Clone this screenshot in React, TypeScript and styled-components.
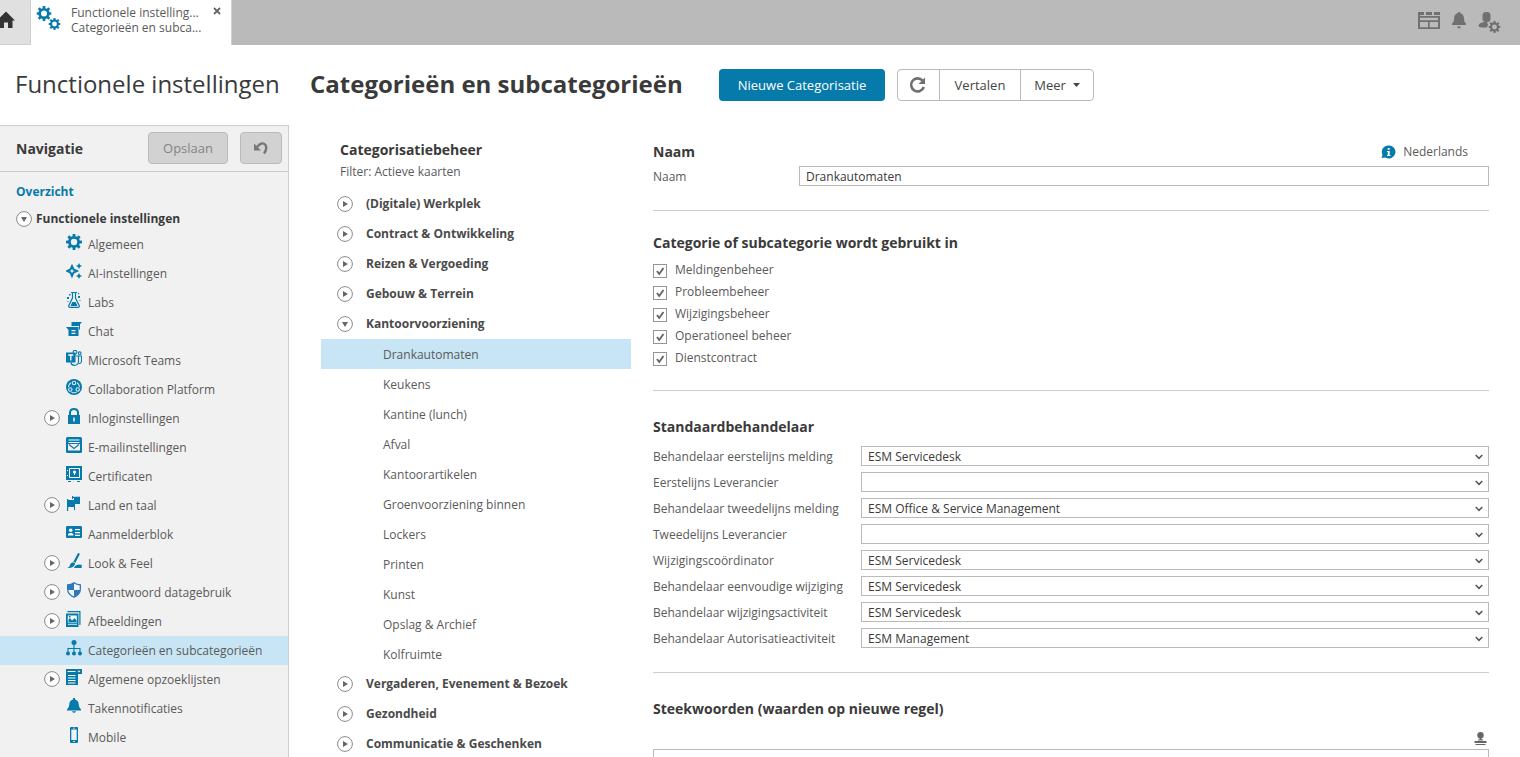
import React from "react";
import styled, { createGlobalStyle } from "styled-components";

const GlobalStyle = createGlobalStyle`
  *, *::before, *::after { box-sizing: border-box; }
  html, body, #root { height: 100%; }
  body {
    margin: 0;
    overflow: hidden;
    background: #fff;
    color: #5a5a5a;
    font-family: "Open Sans", "Noto Sans", sans-serif;
    font-size: 12px;
    line-height: 16px;
  }
  svg { display: block; flex: none; }
`;

const BLUE = "#067aaa";
const SELECTED = "#c7e5f4";

const Page = styled.div`
  display: flex;
  flex-direction: column;
  height: 757px;
  overflow: hidden;
`;

const TopBar = styled.header`
  display: flex;
  flex: none;
  height: 45px;
  background: #bababa;
`;

const HomeTab = styled.div`
  width: 31px;
  background: #e0e0e0;
  border-right: 1px solid #d0d0d0;
  border-bottom: 1px solid #cfcfcf;
  padding-top: 11px;
`;

const ActiveTab = styled.div`
  display: flex;
  width: 201px;
  background: #fff;
  border-right: 1px solid #d0d0d0;
  padding: 5px 10px 0 5px;
`;

const TabText = styled.div`
  flex: 1;
  margin-left: 10px;
  line-height: 15px;
  white-space: nowrap;
`;

const TabClose = styled.div`
  padding-top: 2px;
`;

const TopIcons = styled.div`
  display: flex;
  align-items: flex-start;
  gap: 11px;
  margin-left: auto;
  padding: 11px 19px 0 0;
`;

const TitleBar = styled.div`
  display: flex;
  flex: none;
  align-items: center;
  height: 80px;
  padding-left: 15px;
  color: #3a3a3a;
`;

const ModuleTitle = styled.div`
  width: 295px;
  padding-bottom: 2px;
  font-size: 24px;
  line-height: 32px;
  white-space: nowrap;
`;

const PageTitle = styled.h1`
  width: 409px;
  margin: 0;
  padding-bottom: 2px;
  font-size: 24px;
  line-height: 32px;
  font-weight: 700;
  white-space: nowrap;
`;

const PrimaryButton = styled.button`
  width: 166px;
  height: 32px;
  padding: 0;
  border: 0;
  border-radius: 4px;
  background: ${BLUE};
  color: #fff;
  font: 13px/18px "Open Sans", sans-serif;
`;

const ButtonGroup = styled.div`
  display: flex;
  height: 32px;
  margin-left: 12px;
  border: 1px solid #bababa;
  border-radius: 4px;
  background: #fff;
`;

const GroupButton = styled.button<{ $width: number }>`
  display: flex;
  align-items: center;
  justify-content: center;
  gap: 7px;
  width: ${(p) => p.$width}px;
  padding: 0;
  border: 0;
  background: none;
  color: #444;
  font: 13px/18px "Open Sans", sans-serif;

  & + & { border-left: 1px solid #bababa; }
`;

const Body = styled.div`
  display: flex;
  flex: 1;
  min-height: 0;
`;

const Sidebar = styled.nav`
  flex: none;
  width: 289px;
  background: #f1f1f1;
  border-top: 1px solid #cdcdcd;
  border-right: 1px solid #cdcdcd;
`;

const SidebarHead = styled.div`
  display: flex;
  align-items: flex-start;
  height: 46px;
  padding: 6px 6px 0 16px;
  border-bottom: 1px solid #cdcdcd;
`;

const SidebarTitle = styled.div`
  flex: 1;
  padding-top: 9px;
  color: #3a3a3a;
  font-size: 14px;
  font-weight: 700;
`;

const DisabledButton = styled.button<{ $width: number }>`
  display: flex;
  align-items: center;
  justify-content: center;
  width: ${(p) => p.$width}px;
  height: 32px;
  margin-left: 12px;
  padding: 0;
  border: 1px solid #bababa;
  border-radius: 4px;
  background: #d2d2d2;
  color: #848484;
  font: 13px/18px "Open Sans", sans-serif;
`;

const OverviewLink = styled.div`
  padding: 12px 0 0 16px;
  height: 33px;
  color: ${BLUE};
  font-weight: 700;
`;

const RootRow = styled.div`
  display: flex;
  align-items: center;
  gap: 4px;
  height: 25px;
  padding: 3px 0 0 16px;
  color: #3a3a3a;
  font-weight: 700;
`;

const NavRow = styled.div<{ $selected?: boolean }>`
  display: flex;
  align-items: center;
  height: 29px;
  padding-left: 44px;
  background: ${(p) => (p.$selected ? SELECTED : "transparent")};
  white-space: nowrap;
`;

const ExpanderSlot = styled.div`
  width: 22px;
  padding-bottom: 1px;
`;

const NavIcon = styled.div`
  width: 22px;
  height: 21px;
`;

const Tree = styled.section`
  flex: none;
  width: 310px;
  margin-left: 32px;
`;

const TreeTitle = styled.h2`
  margin: 16px 0 0 19px;
  color: #3a3a3a;
  font-size: 14px;
  line-height: 18px;
`;

const TreeFilter = styled.div`
  margin-left: 19px;
  padding-top: 5px;
  height: 30px;
`;

const TreeGroup = styled.div`
  display: flex;
  align-items: center;
  gap: 13px;
  height: 30px;
  padding-left: 16px;
  color: #4a4a4a;
  font-weight: 700;
`;

const TreeLeaf = styled.div<{ $selected?: boolean }>`
  height: 30px;
  padding: 1px 0 0 62px;
  background: ${(p) => (p.$selected ? SELECTED : "transparent")};
  line-height: 30px;
`;

const Form = styled.main`
  width: 836px;
  margin-left: 22px;
`;

const Section = styled.section<{ $height: number }>`
  height: ${(p) => p.$height}px;
  border-bottom: 1px solid #cdcdcd;
`;

const SectionTitle = styled.h2<{ $top: number; $bottom: number }>`
  margin: 0;
  padding: ${(p) => p.$top}px 0 ${(p) => p.$bottom}px;
  color: #3a3a3a;
  font-size: 14px;
  line-height: 18px;
`;

const NameHead = styled.div`
  display: flex;
  justify-content: space-between;
`;

const Language = styled.div`
  display: flex;
  align-items: center;
  gap: 7px;
  padding: 12px 21px 0 0;
`;

const Field = styled.div<{ $label: number }>`
  display: grid;
  grid-template-columns: ${(p) => p.$label}px 1fr;
  height: 20px;
  margin-bottom: 6px;
  line-height: 22px;
  white-space: nowrap;
`;

const Box = styled.div`
  display: flex;
  justify-content: space-between;
  height: 20px;
  padding: 0 5px 0 6px;
  border: 1px solid #bababa;
  background: #fff;
  color: #3a3a3a;
  line-height: 20px;

  svg { margin-top: 7px; }
`;

const CheckRow = styled.div`
  display: flex;
  gap: 8px;
  height: 22px;
  line-height: 18px;
`;

const CheckBox = styled.div`
  display: flex;
  width: 14px;
  height: 14px;
  margin-top: 3px;
  border: 1px solid #949494;
  background: #fff;
`;

const StampRow = styled.div`
  display: flex;
  justify-content: flex-end;
  padding: 5px 2px 0 0;
  height: 22px;
`;

const TextArea = styled.div`
  height: 40px;
  border: 1px solid #bababa;
`;

function Expander({ open }: { open?: boolean }) {
  return (
    <svg width="16" height="16" viewBox="0 0 16 16">
      <circle cx="8" cy="8" r="7.4" fill="#fff" stroke="#8a8a8a" strokeWidth="1" />
      <path d={open ? "M5 6h6l-3 5z" : "M6 5v6l5-3z"} fill="#666" />
    </svg>
  );
}

function Gear({ size, color }: { size: number; color: string }) {
  return (
    <svg width={size} height={size} viewBox="0 0 16 16" fill="none" stroke={color}>
      <circle cx="8" cy="8" r="4.6" strokeWidth="2.800" />
      {[0, 45, 90, 135, 180, 225, 270, 315].map((a) => (
        <path key={a} d="M8 0v3" strokeWidth="2.800" transform={`rotate(${a} 8 8)`} />
      ))}
    </svg>
  );
}

const icons: Record<string, React.ReactNode> = {
  gear: (
    <g fill="none" stroke={BLUE} strokeWidth="2.800">
      <circle cx="8" cy="8" r="4.600" />
      {[0, 45, 90, 135, 180, 225, 270, 315].map((a) => (
        <path key={a} d="M8 0v3" transform={`rotate(${a} 8 8)`} />
      ))}
    </g>
  ),
  ai: (
    <>
      <path d="M6 3.200 7.500 6.500 10.800 8 7.500 9.500 6 12.800 4.500 9.500 1.200 8 4.500 6.500z" fill="none" stroke={BLUE} strokeWidth="2" />
      <path d="M13 0l1 2 2 1-2 1-1 2-1-2-2-1 2-1zM13 10l1 2 2 1-2 1-1 2-1-2-2-1 2-1z" />
    </>
  ),
  labs: (
    <>
      <path d="M5 .5h6M6.500 1v5L2.800 13.500q-.6 1.700 1 1.900h8.400q1.600-.2 1-1.900L9.500 6V1" fill="none" stroke={BLUE} strokeWidth="1.200" />
      <path d="M6.300 10h3.400l1.800 4h-7z" />
      <path d="M3 2h1.500v1.500H3zM1 5h2v2H1zM12 1h1.200v1.200H12zM12 4h2v2h-2zM1.500 9h1v1h-1zM13.500 8h1v1h-1z" />
    </>
  ),
  chat: (
    <path d="M5.500 1H16l-2 2.200V8.500h-1V5H5.500zM0 6h12.500v9H2.500V9zM5.500 9v1.200h4V9zm0 2.800V13h4v-1.200z" fillRule="evenodd" />
  ),
  teams: (
    <>
      <path d="M0 2.500h9.500v10H0z" />
      <path d="M2.300 5h5M4.800 5v5.500" stroke="#fff" strokeWidth="1.300" fill="none" />
      <g fill="none" stroke={BLUE} strokeWidth="1.100">
        <circle cx="9" cy="2.300" r="1.900" />
        <circle cx="13.700" cy="3.300" r="1.400" />
        <path d="M9.500 6h3v5.500q-.4 3.700-4 3.900-3 0-3.700-2.900M12.500 6h3v5.500q-.3 2.200-3 2.200" />
      </g>
    </>
  ),
  collab: (
    <>
      <circle cx="8" cy="8" r="8" />
      <g fill="none" stroke="#d7eaf3" strokeWidth="1.100">
        <circle cx="8" cy="4" r="1.700" />
        <circle cx="4.300" cy="10.500" r="1.700" />
        <circle cx="11.700" cy="10.500" r="1.700" />
        <path d="M5 3.800Q2.500 5.500 2.400 8M11 3.800Q13.500 5.500 13.600 8M5.500 13.200q2.500 1.200 5 0" />
      </g>
    </>
  ),
  lock: (
    <>
      <path d="M4 8V4.500Q4.300 1 8 1t4 3.500V8" fill="none" stroke={BLUE} strokeWidth="2" />
      <path d="M2 7h12v9H2zM7.200 9.500v4h1.600v-4z" fillRule="evenodd" />
    </>
  ),
  mail: (
    <>
      <rect width="16" height="16" rx="1.500" />
      <path d="M2.500 3h11M2.500 5.500h11" stroke="#fff" strokeWidth="1.200" />
      <path d="M2 7h12v6.500H2z" fill="#f1f1f1" />
      <path d="M3 7.500l5 4 5-4" fill="none" stroke={BLUE} strokeWidth="1.200" />
    </>
  ),
  safe: (
    <>
      <path d="M0 0h16v14H0zM2 15h3v1H2zM11 15h3v1h-3z" />
      <path d="M3.500 2.500h10v9h-10zM1 4.500h1M1 9.500h1" fill="none" stroke="#fff" />
      <circle cx="8.500" cy="6" r="1.600" fill="#fff" />
      <path d="M8 6h1v3H8z" fill="#fff" />
    </>
  ),
  flags: <path d="M1 4h1.200v1H8V3h6v6H9v3H2.200v4H1zM6 1h1v3H6zM7 1.800h7V3H7zM8 11h1v4H8z" />,
  card: (
    <>
      <rect y="2" width="16" height="12" rx="1.300" />
      <circle cx="4.700" cy="6.200" r="1.800" fill="#fff" />
      <path d="M2 11.500V10q2.700-2 5.400 0v1.500zM9 5h5v1.200H9zM9 8h5v1.200H9zM9 10.800h5V12H9z" fill="#fff" />
    </>
  ),
  brush: (
    <path d="M12 0l2 .8-4.600 9-2-1zM7 9.200l2.200 1.100Q8.500 15.500 1 15q3-1 3.200-3.500Q5 9.500 7 9.200zM9 13q3-2.200 5-1.200 1 .2 1.700-.3V15H8z" />
  ),
  shield: (
    <>
      <path d="M8 0q3 2.400 7 2.300V7q0 6-7 9-7-3-7-9V2.300Q5 2.400 8 0z" fill="#2f76bd" />
      <path d="M8 1.600q2.500 1.700 5.700 1.900V8H8zM8 8v6.500Q3 12 2.300 8z" fill="#eef5fb" />
    </>
  ),
  images: (
    <>
      <path d="M0 2.500h12.500V16H0z" />
      <path d="M1.500 0h13v14h-1.200V1.200H1.500z" />
      <path d="M1.800 4.500h9v7h-9z" fill="#fff" />
      <path d="M2.500 11V8.500L4 7l2 2.500L8.500 7l2 2.500V11zM3 5h1.500v1.500H3z" />
      <path d="M2 13.300h9" stroke="#d7eaf3" />
    </>
  ),
  tree: (
    <>
      <circle cx="8" cy="2.500" r="2.500" />
      <circle cx="2" cy="13.500" r="2" />
      <circle cx="8" cy="13.500" r="2" />
      <circle cx="14" cy="13.500" r="2" />
      <path d="M8 3v10M2 13V8.500h12V13" fill="none" stroke={BLUE} strokeWidth="1.100" />
    </>
  ),
  list: (
    <>
      <path d="M0 0h16v5h-4v11H0z" />
      <path d="M1.500 2.500h8M2 6.500h7.500M2 9h7.500M2 11.500h7.500M2 14h7.500" stroke="#fff" strokeWidth="1" />
      <path d="M11.500 1.700h3L13 3.500z" fill="#fff" />
    </>
  ),
  bell: <path d="M7 0h2v1.500q3.700.8 3.800 5.500 0 2.500 2.200 4.500v1H1v-1Q3.200 9.500 3.200 7 3.300 2.300 7 1.500zM6 13.200h4q-.5 1.500-2 1.500t-2-1.500z" />,
  mobile: (
    <path d="M5 0h6q1 0 1 1v14q0 1-1 1H5q-1 0-1-1V1q0-1 1-1zm.3 2.500v10.500h5.400V2.500zM7 .8v.7h2V.8zM7.200 14v1h1.600v-1z" fillRule="evenodd" />
  ),
};

const navItems: { label: string; icon: string; expandable?: boolean; selected?: boolean }[] = [
  { label: "Algemeen", icon: "gear" },
  { label: "AI-instellingen", icon: "ai" },
  { label: "Labs", icon: "labs" },
  { label: "Chat", icon: "chat" },
  { label: "Microsoft Teams", icon: "teams" },
  { label: "Collaboration Platform", icon: "collab" },
  { label: "Inloginstellingen", icon: "lock", expandable: true },
  { label: "E-mailinstellingen", icon: "mail" },
  { label: "Certificaten", icon: "safe" },
  { label: "Land en taal", icon: "flags", expandable: true },
  { label: "Aanmelderblok", icon: "card" },
  { label: "Look & Feel", icon: "brush", expandable: true },
  { label: "Verantwoord datagebruik", icon: "shield", expandable: true },
  { label: "Afbeeldingen", icon: "images", expandable: true },
  { label: "Categorieën en subcategorieën", icon: "tree", selected: true },
  { label: "Algemene opzoeklijsten", icon: "list", expandable: true },
  { label: "Takennotificaties", icon: "bell" },
  { label: "Mobile", icon: "mobile" },
];

const treeBefore = ["(Digitale) Werkplek", "Contract & Ontwikkeling", "Reizen & Vergoeding", "Gebouw & Terrein"];
const treeLeaves = [
  "Drankautomaten", "Keukens", "Kantine (lunch)", "Afval", "Kantoorartikelen", "Groenvoorziening binnen",
  "Lockers", "Printen", "Kunst", "Opslag & Archief", "Kolfruimte",
];
const treeAfter = ["Vergaderen, Evenement & Bezoek", "Gezondheid", "Communicatie & Geschenken"];

const usedIn = ["Meldingenbeheer", "Probleembeheer", "Wijzigingsbeheer", "Operationeel beheer", "Dienstcontract"];

const handlers: [string, string][] = [
  ["Behandelaar eerstelijns melding", "ESM Servicedesk"],
  ["Eerstelijns Leverancier", ""],
  ["Behandelaar tweedelijns melding", "ESM Office & Service Management"],
  ["Tweedelijns Leverancier", ""],
  ["Wijzigingscoördinator", "ESM Servicedesk"],
  ["Behandelaar eenvoudige wijziging", "ESM Servicedesk"],
  ["Behandelaar wijzigingsactiviteit", "ESM Servicedesk"],
  ["Behandelaar Autorisatieactiviteit", "ESM Management"],
];

function Group({ label, open }: { label: string; open?: boolean }) {
  return (
    <TreeGroup>
      <Expander open={open} />
      {label}
    </TreeGroup>
  );
}

export default function App() {
  return (
    <Page>
      <GlobalStyle />
      <TopBar>
        <HomeTab>
          <svg width="15" height="17" viewBox="0 0 15 17">
            <path d="M-3 9.500 6 .5l9 9h-2.500V17H8v-5.500H4V17H0V9.500z" fill="#333" />
          </svg>
        </HomeTab>
        <ActiveTab>
          <svg width="25" height="26" viewBox="0 0 25 26">
            <g transform="translate(.5 1)"><Gear size={15} color={BLUE} /></g>
            <g transform="translate(12.500 13)"><Gear size={12} color={BLUE} /></g>
          </svg>
          <TabText>
            <div>Functionele instelling...</div>
            <div>Categorieën en subca...</div>
          </TabText>
          <TabClose>
            <svg width="8" height="8" viewBox="0 0 8 8">
              <path d="M1 1l6 6M7 1L1 7" stroke="#666" strokeWidth="1.800" />
            </svg>
          </TabClose>
        </ActiveTab>
        <TopIcons>
          <svg width="22" height="18" viewBox="0 0 22 18" fill="#707070">
            <path d="M0 1h6v3H0zM8 1h6v3H8zM16 1h6v3h-6z" />
            <path d="M0 4h2v14H0zM20 5h2v13h-2zM0 5h22v1.700H0zM0 9.200h22V11H0zM0 16.200h22V18H0zM10 10h1.700v7H10z" />
          </svg>
          <svg width="16" height="18" viewBox="0 0 16 18" fill="#707070">
            <path d="M7 1h2v1q4 1 4 6 0 3 2 4.500V14H1v-1.500Q3 11 3 8q0-5 4-6zM6 15.500h4q-.5 2-2 2t-2-2z" />
          </svg>
          <svg width="23" height="22" viewBox="0 0 23 22" fill="#707070">
            <rect x="4.500" y="1" width="8" height="10" rx="3.500" />
            <path d="M6 11h3l1 2.500-1 3Q1 17 .5 15q0-3 5.500-4z" />
            <g transform="translate(10.500 10)"><Gear size={12} color="#707070" /></g>
          </svg>
        </TopIcons>
      </TopBar>

      <TitleBar>
        <ModuleTitle>Functionele instellingen</ModuleTitle>
        <PageTitle>Categorieën en subcategorieën</PageTitle>
        <PrimaryButton>Nieuwe Categorisatie</PrimaryButton>
        <ButtonGroup>
          <GroupButton $width={41}>
            <svg width="19" height="18" viewBox="0 0 19 18">
              <path d="M13.500 4.500A6.500 6.500 0 1 0 14.800 11" fill="none" stroke="#707070" strokeWidth="2.600" />
              <path d="M16 1.500v6.500H9.500z" fill="#707070" />
            </svg>
          </GroupButton>
          <GroupButton $width={81}>Vertalen</GroupButton>
          <GroupButton $width={73}>
            Meer
            <svg width="7" height="4" viewBox="0 0 7 4"><path d="M0 0h7L3.500 4z" fill="#444" /></svg>
          </GroupButton>
        </ButtonGroup>
      </TitleBar>

      <Body>
        <Sidebar>
          <SidebarHead>
            <SidebarTitle>Navigatie</SidebarTitle>
            <DisabledButton $width={80}>Opslaan</DisabledButton>
            <DisabledButton $width={42}>
              <svg width="16" height="14" viewBox="0 0 16 14">
                <path d="M4 6Q9 0 12.500 4q2 3.500-1.500 8.500" fill="none" stroke="#777" strokeWidth="2.400" />
                <path d="M1 2.500v7h7z" fill="#777" />
              </svg>
            </DisabledButton>
          </SidebarHead>
          <OverviewLink>Overzicht</OverviewLink>
          <RootRow>
            <Expander open />
            Functionele instellingen
          </RootRow>
          {navItems.map((n) => (
            <NavRow key={n.label} $selected={n.selected}>
              <ExpanderSlot>{n.expandable && <Expander />}</ExpanderSlot>
              <NavIcon>
                <svg width="16" height="16" viewBox="0 0 16 16" fill={BLUE}>{icons[n.icon]}</svg>
              </NavIcon>
              {n.label}
            </NavRow>
          ))}
        </Sidebar>

        <Tree>
          <TreeTitle>Categorisatiebeheer</TreeTitle>
          <TreeFilter>Filter: Actieve kaarten</TreeFilter>
          {treeBefore.map((t) => <Group key={t} label={t} />)}
          <Group label="Kantoorvoorziening" open />
          {treeLeaves.map((t, i) => <TreeLeaf key={t} $selected={i === 0}>{t}</TreeLeaf>)}
          {treeAfter.map((t) => <Group key={t} label={t} />)}
        </Tree>

        <Form>
          <Section $height={86}>
            <NameHead>
              <SectionTitle $top={18} $bottom={5}>Naam</SectionTitle>
              <Language>
                <svg width="15" height="14" viewBox="0 0 15 14">
                  <path d="M7.500.5a6.500 6.500 0 1 1-3 12L.5 13l1-3A6.500 6.500 0 0 1 7.500.5z" fill={BLUE} />
                  <path d="M6.700 3h2v1.700h-2zM6 6h2.700v4h.8v1H6v-1h.8V7H6z" fill="#fff" />
                </svg>
                Nederlands
              </Language>
            </NameHead>
            <Field $label={146}>
              <span>Naam</span>
              <Box>Drankautomaten</Box>
            </Field>
          </Section>
          <Section $height={180}>
            <SectionTitle $top={23} $bottom={9}>Categorie of subcategorie wordt gebruikt in</SectionTitle>
            {usedIn.map((u) => (
              <CheckRow key={u}>
                <CheckBox>
                  <svg width="12" height="12" viewBox="0 0 12 12">
                    <path d="M3 6l2.200 3L9.500 3" fill="none" stroke="#666" strokeWidth="1.900" />
                  </svg>
                </CheckBox>
                {u}
              </CheckRow>
            ))}
          </Section>
          <Section $height={282}>
            <SectionTitle $top={27} $bottom={10}>Standaardbehandelaar</SectionTitle>
            {handlers.map(([label, value]) => (
              <Field key={label} $label={208}>
                <span>{label}</span>
                <Box>
                  <span>{value}</span>
                  <svg width="8" height="6" viewBox="0 0 8 6">
                    <path d="M.7.9 4 4.300 7.300.9" fill="none" stroke="#555" strokeWidth="1.500" />
                  </svg>
                </Box>
              </Field>
            ))}
          </Section>
          <SectionTitle $top={27} $bottom={9}>Steekwoorden (waarden op nieuwe regel)</SectionTitle>
          <StampRow>
            <svg width="13" height="14" viewBox="0 0 13 14" fill="#666">
              <circle cx="6.500" cy="3.200" r="3.200" />
              <path d="M5.500 5h2v3.500h-2zM4 7.500h5v1H4zM.5 9h12v2H.500zM1.500 12h10v1h-10z" />
            </svg>
          </StampRow>
          <TextArea />
        </Form>
      </Body>
    </Page>
  );
}
